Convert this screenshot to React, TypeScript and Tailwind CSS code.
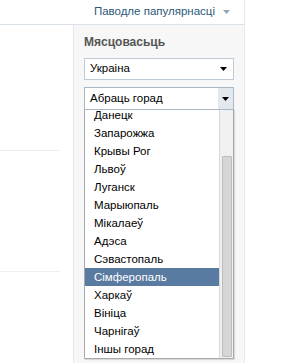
const cities = [
  "Данецк",
  "Запарожжа",
  "Крывы Рог",
  "Львоў",
  "Луганск",
  "Марыюпаль",
  "Мікалаеў",
  "Адэса",
  "Сэвастопаль",
  "Сімферопаль",
  "Харкаў",
  "Вініца",
  "Чарнігаў",
  "Іншы горад",
];

const Caret = () => (
  <svg width="7" height="4" viewBox="0 0 7 4" className="block">
    <path d="M0 0h7L3.5 4z" fill="currentColor" />
  </svg>
);

export default function App() {
  return (
    <div
      className="w-[295px] h-[363px] overflow-hidden bg-white text-[11.5px] text-black"
      style={{ fontFamily: "'Liberation Sans', Arial, sans-serif" }}
    >
      <div className="w-[245px] h-full border-r border-[#e7eaed] flex flex-col">
        {/* sort link */}
        <div className="h-[25px] border-b border-[#dae1e8] flex items-center justify-end pr-[14px] pb-[1px]">
          <span className="text-[#2b587a]">Паводле папулярнасці</span>
          <span className="ml-[8px] text-[#92a5b8]">
            <Caret />
          </span>
        </div>

        <div className="flex flex-1">
          {/* left results column */}
          <div className="w-[73px] pt-[125px]">
            <div className="h-px w-[60px] bg-[#eceef1]"></div>
            <div className="h-px w-[60px] bg-[#eceef1] mt-[120px]"></div>
          </div>

          {/* filter sidebar */}
          <div className="flex-1 bg-[#f7f7f7] border-l border-[#e4e8ed] pl-[10px] pr-[10px] pt-[11px]">
            <div className="font-bold text-[12px] text-[#555] leading-[13px]">Мясцовасьць</div>

            <div className="mt-[9px] h-[22px] w-[150px] bg-white border border-[#c0cad5] flex items-center justify-between pl-[5px] pr-[6px]">
              <span>Украіна</span>
              <Caret />
            </div>

            <div className="mt-[7px] w-[150px] relative">
              <div className="h-[23px] bg-white border border-[#a9b8c5] flex items-center relative z-10">
                <span className="flex-1 pl-[5px]">Абраць горад</span>
                <span className="w-[15px] h-full bg-[#e2e8ee] flex items-center justify-center">
                  <Caret />
                </span>
              </div>
              <div className="h-[250px] -mt-[1px] flex bg-white border border-[#a9a9a9] border-t-0 shadow-[1px_1px_1px_rgba(0,0,0,0.12)] overflow-hidden">
                <div className="flex-1 -mt-[3px]">
                  {cities.map((c) => (
                    <div
                      key={c}
                      className={
                        c === "Сімферопаль"
                          ? "h-[18px] leading-[18px] pl-[9px] bg-[#5a7ba1] text-white"
                          : "h-[18px] leading-[18px] pl-[9px]"
                      }
                    >
                      {c}
                    </div>
                  ))}
                </div>
                <div className="w-[14px] bg-[#f0f0f0] border-l border-[#d8d8d8] pt-[47px] pl-[2px] pr-[1px] pb-[1px]">
                  <div className="h-full bg-[#d6d6d6] border border-[#bcbcbc] rounded-[1px]"></div>
                </div>
              </div>
            </div>
          </div>
        </div>
      </div>
    </div>
  );
}
